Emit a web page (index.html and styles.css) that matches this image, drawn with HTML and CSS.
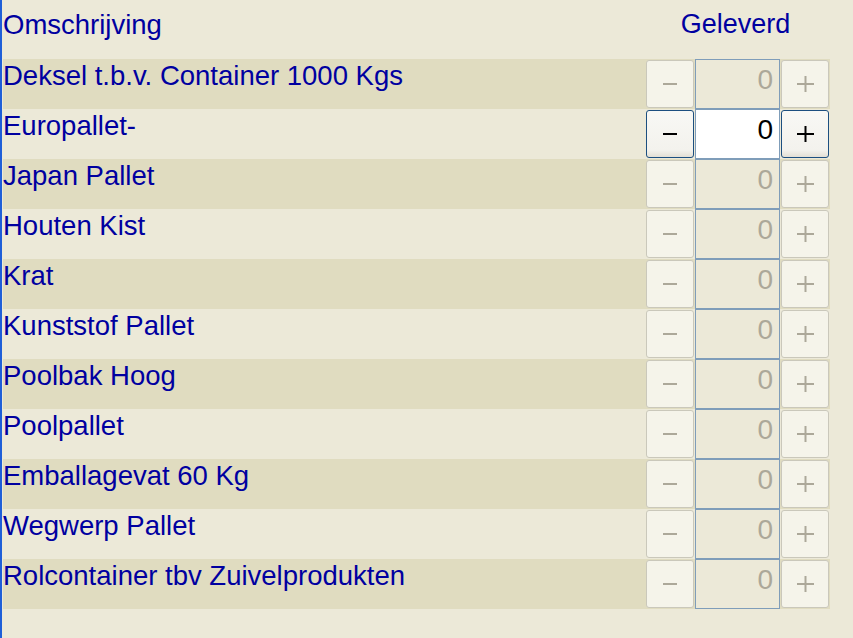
FILE: index.html
```html
<!DOCTYPE html>
<html lang="nl">

<head>
  <meta charset="UTF-8" />
  <title>Emballage geleverd</title>
  <link rel="stylesheet" href="styles.css">
</head>

<body>
  <div class="page">
    <div class="head">
      <div class="label">Omschrijving</div>
      <div class="qty-head">Geleverd</div>
    </div>

    <div class="row">
      <div class="label">Deksel t.b.v. Container 1000 Kgs</div>
      <div class="qty">
        <button class="step" disabled><svg width="14" height="2"><rect width="14" height="2" /></svg></button>
        <input type="text" value="0" disabled>
        <button class="step" disabled><svg width="17" height="16"><rect x="0" y="7" width="17" height="2" /><rect x="7.5" y="0" width="2" height="16" /></svg></button>
      </div>
    </div>
    <div class="row">
      <div class="label">Europallet-</div>
      <div class="qty">
        <button class="step"><svg width="14" height="2"><rect width="14" height="2" /></svg></button>
        <input type="text" value="0">
        <button class="step"><svg width="17" height="16"><rect x="0" y="7" width="17" height="2" /><rect x="7.5" y="0" width="2" height="16" /></svg></button>
      </div>
    </div>
    <div class="row">
      <div class="label">Japan Pallet</div>
      <div class="qty">
        <button class="step" disabled><svg width="14" height="2"><rect width="14" height="2" /></svg></button>
        <input type="text" value="0" disabled>
        <button class="step" disabled><svg width="17" height="16"><rect x="0" y="7" width="17" height="2" /><rect x="7.5" y="0" width="2" height="16" /></svg></button>
      </div>
    </div>
    <div class="row">
      <div class="label">Houten Kist</div>
      <div class="qty">
        <button class="step" disabled><svg width="14" height="2"><rect width="14" height="2" /></svg></button>
        <input type="text" value="0" disabled>
        <button class="step" disabled><svg width="17" height="16"><rect x="0" y="7" width="17" height="2" /><rect x="7.5" y="0" width="2" height="16" /></svg></button>
      </div>
    </div>
    <div class="row">
      <div class="label">Krat</div>
      <div class="qty">
        <button class="step" disabled><svg width="14" height="2"><rect width="14" height="2" /></svg></button>
        <input type="text" value="0" disabled>
        <button class="step" disabled><svg width="17" height="16"><rect x="0" y="7" width="17" height="2" /><rect x="7.5" y="0" width="2" height="16" /></svg></button>
      </div>
    </div>
    <div class="row">
      <div class="label">Kunststof Pallet</div>
      <div class="qty">
        <button class="step" disabled><svg width="14" height="2"><rect width="14" height="2" /></svg></button>
        <input type="text" value="0" disabled>
        <button class="step" disabled><svg width="17" height="16"><rect x="0" y="7" width="17" height="2" /><rect x="7.5" y="0" width="2" height="16" /></svg></button>
      </div>
    </div>
    <div class="row">
      <div class="label">Poolbak Hoog</div>
      <div class="qty">
        <button class="step" disabled><svg width="14" height="2"><rect width="14" height="2" /></svg></button>
        <input type="text" value="0" disabled>
        <button class="step" disabled><svg width="17" height="16"><rect x="0" y="7" width="17" height="2" /><rect x="7.5" y="0" width="2" height="16" /></svg></button>
      </div>
    </div>
    <div class="row">
      <div class="label">Poolpallet</div>
      <div class="qty">
        <button class="step" disabled><svg width="14" height="2"><rect width="14" height="2" /></svg></button>
        <input type="text" value="0" disabled>
        <button class="step" disabled><svg width="17" height="16"><rect x="0" y="7" width="17" height="2" /><rect x="7.5" y="0" width="2" height="16" /></svg></button>
      </div>
    </div>
    <div class="row">
      <div class="label">Emballagevat 60 Kg</div>
      <div class="qty">
        <button class="step" disabled><svg width="14" height="2"><rect width="14" height="2" /></svg></button>
        <input type="text" value="0" disabled>
        <button class="step" disabled><svg width="17" height="16"><rect x="0" y="7" width="17" height="2" /><rect x="7.5" y="0" width="2" height="16" /></svg></button>
      </div>
    </div>
    <div class="row">
      <div class="label">Wegwerp Pallet</div>
      <div class="qty">
        <button class="step" disabled><svg width="14" height="2"><rect width="14" height="2" /></svg></button>
        <input type="text" value="0" disabled>
        <button class="step" disabled><svg width="17" height="16"><rect x="0" y="7" width="17" height="2" /><rect x="7.5" y="0" width="2" height="16" /></svg></button>
      </div>
    </div>
    <div class="row">
      <div class="label">Rolcontainer tbv Zuivelprodukten</div>
      <div class="qty">
        <button class="step" disabled><svg width="14" height="2"><rect width="14" height="2" /></svg></button>
        <input type="text" value="0" disabled>
        <button class="step" disabled><svg width="17" height="16"><rect x="0" y="7" width="17" height="2" /><rect x="7.5" y="0" width="2" height="16" /></svg></button>
      </div>
    </div>
  </div>
</body>

</html>
```

FILE: styles.css
```css
body {
  margin: 0;
  background: #ece9d8;
  font-family: 'Liberation Sans', Arial, sans-serif;
  color: #0000a0;
}

.page {
  box-sizing: border-box;
  height: 100vh;
  border-left: 2px solid #1f5fd8;
  padding-left: 1px;
}

.head,
.row {
  display: flex;
  width: 827px;
}

.head {
  height: 59px;
  box-sizing: border-box;
  padding-top: 9px;
}

.label {
  flex: 1;
  font-size: 27.5px;
  line-height: 31px;
}

.row .label {
  padding-top: 1px;
}

.qty-head {
  width: 185px;
  box-sizing: border-box;
  padding-right: 4px;
  text-align: center;
  font-size: 27px;
  line-height: 31px;
}

.row {
  height: 50px;
}

.row:nth-child(even) {
  background: #e0dcc0;
}

.qty {
  display: flex;
  align-items: flex-start;
  width: 185px;
}

.step {
  box-sizing: border-box;
  width: 48px;
  height: 48px;
  margin: 1px;
  padding: 0;
  display: flex;
  align-items: center;
  justify-content: center;
  border: 1px solid #1c4f80;
  border-radius: 3px;
  background: linear-gradient(#f8f8f5, #f3f2ed 85%, #e2dfd5);
  fill: #000;
}

.step:disabled {
  border-color: #cac8bb;
  background: #f5f4ea;
  fill: #aca899;
}

input {
  box-sizing: border-box;
  width: 85px;
  height: 50px;
  margin: 0;
  padding: 0 6px 9px 0;
  border: 1px solid #7f9db9;
  background: #fff;
  color: #000;
  font-family: 'Liberation Sans', Arial, sans-serif;
  font-size: 28px;
  text-align: right;
}

input:disabled {
  background: #ece9d8;
  color: #aca899;
}
```
